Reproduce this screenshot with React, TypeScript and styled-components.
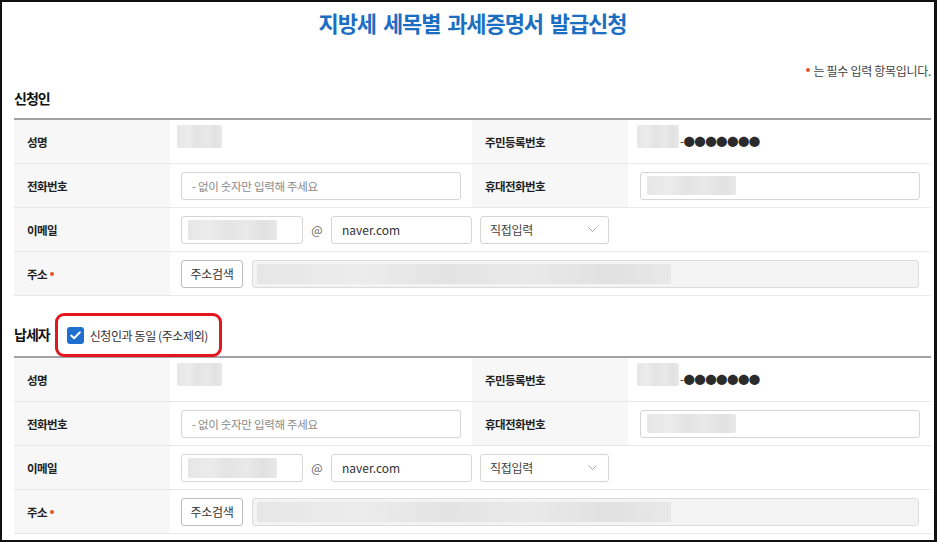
import styled, { createGlobalStyle, css } from 'styled-components';

const GlobalStyle = createGlobalStyle`
  html, body {
    margin: 0;
    padding: 0;
    background: #fff;
  }
  body {
    font-family: 'Noto Sans CJK KR', 'Noto Sans', sans-serif;
    color: #222;
  }
  * {
    box-sizing: border-box;
  }
`;

const Frame = styled.div`
  width: 937px;
  height: 542px;
  border: 2px solid #111;
  border-right-width: 3px;
  padding: 0 3px 0 12px;
  overflow: hidden;
`;

const Title = styled.h1`
  margin: 0;
  height: 40px;
  line-height: 40px;
  text-align: center;
  font-size: 22px;
  font-weight: 700;
  letter-spacing: -1.1px;
  word-spacing: 3px;
  color: #1b6ec2;
`;

const RequiredNote = styled.p`
  margin: 20px 0 0;
  height: 16px;
  display: flex;
  justify-content: flex-end;
  align-items: center;
  gap: 3px;
  font-size: 12px;
  letter-spacing: -0.3px;
  color: #444;
`;

const Dot = styled.span`
  display: inline-block;
  width: 4px;
  height: 4px;
  border-radius: 50%;
  background: #e4561f;
`;

const SectionHead = styled.div<{ $height: number; $top?: number }>`
  height: ${({ $height }) => $height}px;
  padding-top: ${({ $top }) => $top ?? 0}px;
  display: flex;
  align-items: center;
  gap: 5px;
`;

const SectionTitle = styled.h2`
  margin: 0;
  font-size: 14px;
  font-weight: 700;
  letter-spacing: -1px;
  color: #111;
`;

const HighlightBox = styled.label`
  position: relative;
  top: 1px;
  height: 44px;
  display: flex;
  align-items: center;
  gap: 6px;
  padding: 0 11px 0 9px;
  border: 3px solid #e3161d;
  border-radius: 9px;
  font-size: 12px;
  letter-spacing: -0.4px;
  color: #333;
`;

const CheckBox = styled.span`
  width: 17px;
  height: 17px;
  border-radius: 3px;
  background: #1f6fcf;
  display: flex;
  align-items: center;
  justify-content: center;
`;

const Table = styled.div`
  border-top: 2px solid #a3a3a3;
`;

const Row = styled.div`
  display: grid;
  grid-template-columns: 156px 302px 156px 1fr;
  height: 44px;
  border-bottom: 1px solid #e8e8e8;
`;

const Label = styled.div`
  background: #f7f7f7;
  display: flex;
  align-items: center;
  gap: 3px;
  padding-left: 13px;
  font-size: 11.5px;
  font-weight: 700;
  letter-spacing: -0.6px;
  color: #222;
`;

const Value = styled.div<{ $span?: number; $pad?: number; $padRight?: number; $gap?: number }>`
  grid-column: span ${({ $span }) => $span ?? 1};
  display: flex;
  align-items: center;
  gap: ${({ $gap }) => $gap ?? 8}px;
  padding-left: ${({ $pad }) => $pad ?? 11}px;
  padding-right: ${({ $padRight }) => $padRight ?? 11}px;
`;

const fieldBase = css`
  height: 28px;
  border: 1px solid #d5d5d5;
  border-radius: 3px;
  background: #fff;
  font-family: inherit;
  font-size: 12px;
  color: #333;
`;

const TextInput = styled.input<{ $w: number }>`
  ${fieldBase};
  width: ${({ $w }) => $w}px;
  padding: 0 10px;
  outline: none;
  &::placeholder {
    color: #8a8a8a;
    font-size: 11.5px;
    letter-spacing: -0.3px;
  }
`;

const Field = styled.div<{ $w?: number; $muted?: boolean; $pad?: number }>`
  ${fieldBase};
  width: ${({ $w }) => ($w ? `${$w}px` : 'auto')};
  flex: ${({ $w }) => ($w ? 'none' : 1)};
  display: flex;
  align-items: center;
  padding: 0 ${({ $pad }) => $pad ?? 6}px;
  background: ${({ $muted }) => ($muted ? '#f3f3f3' : '#fff')};
  border-color: ${({ $muted }) => ($muted ? '#dcdcdc' : '#d5d5d5')};
`;

const Select = styled.div`
  ${fieldBase};
  width: 129px;
  display: flex;
  align-items: center;
  justify-content: space-between;
  padding: 0 11px 0 9px;
  letter-spacing: -0.3px;
  color: #444;
`;

const At = styled.span`
  width: 12px;
  text-align: center;
  font-size: 12px;
  color: #666;
`;

const Button = styled.button`
  ${fieldBase};
  width: 62px;
  border-color: #bcbcbc;
  padding: 0;
  letter-spacing: -0.3px;
  cursor: pointer;
`;

const Blur = styled.span<{ $w: number; $h: number; $lift?: number }>`
  display: block;
  flex: none;
  width: ${({ $w }) => $w}px;
  height: ${({ $h }) => $h}px;
  margin-bottom: ${({ $lift }) => ($lift ?? 0) * 2}px;
  border-radius: 2px;
  background: linear-gradient(
    90deg,
    #e6e6e6 0%,
    #ececec 25%,
    #e3e3e3 45%,
    #e9e9e9 65%,
    #e1e1e1 85%,
    #e8e8e8 100%
  );
  filter: blur(0.6px);
`;

const Masked = styled.span`
  font-size: 11.5px;
  letter-spacing: -0.6px;
  color: #2b2b2b;
  margin-bottom: 2px;
`;

const Chevron = () => (
  <svg width="9" height="5" viewBox="0 0 9 5" fill="none">
    <path d="M0.5 0.5L4.5 4.5L8.5 0.5" stroke="#a0a0a0" strokeWidth="1" />
  </svg>
);

const Check = () => (
  <svg width="11" height="9" viewBox="0 0 11 9" fill="none">
    <path d="M1.2 4.6L4.1 7.3L9.8 1.4" stroke="#fff" strokeWidth="2" strokeLinecap="round" strokeLinejoin="round" />
  </svg>
);

const PersonTable = () => (
  <Table>
    <Row>
      <Label>성명</Label>
      <Value $pad={7}>
        <Blur $w={45} $h={23} $lift={5} />
      </Value>
      <Label>주민등록번호</Label>
      <Value $pad={9} $gap={1}>
        <Blur $w={42} $h={23} $lift={5} />
        <Masked>-●●●●●●●</Masked>
      </Value>
    </Row>
    <Row>
      <Label>전화번호</Label>
      <Value>
        <TextInput $w={280} placeholder="- 없이 숫자만 입력해 주세요" />
      </Value>
      <Label>휴대전화번호</Label>
      <Value $pad={12} $padRight={12}>
        <Field $w={280}>
          <Blur $w={89} $h={19} />
        </Field>
      </Value>
    </Row>
    <Row>
      <Label>이메일</Label>
      <Value $span={3}>
        <Field $w={122}>
          <Blur $w={89} $h={20} />
        </Field>
        <At>@</At>
        <TextInput $w={141} defaultValue="naver.com" readOnly />
        <Select>
          직접입력
          <Chevron />
        </Select>
      </Value>
    </Row>
    <Row>
      <Label>
        주소
        <Dot />
      </Label>
      <Value $span={3} $padRight={12} $gap={9}>
        <Button type="button">주소검색</Button>
        <Field $muted $pad={4}>
          <Blur $w={414} $h={20} />
        </Field>
      </Value>
    </Row>
  </Table>
);

const App = () => {
  return (
    <>
      <GlobalStyle />
      <Frame>
        <Title>지방세 세목별 과세증명서 발급신청</Title>
        <RequiredNote>
          <Dot />는 필수 입력 항목입니다.
        </RequiredNote>

        <SectionHead $height={40}>
          <SectionTitle>신청인</SectionTitle>
        </SectionHead>
        <PersonTable />

        <SectionHead $height={60} $top={16}>
          <SectionTitle>납세자</SectionTitle>
          <HighlightBox>
            <CheckBox>
              <Check />
            </CheckBox>
            신청인과 동일 (주소제외)
          </HighlightBox>
        </SectionHead>
        <PersonTable />
      </Frame>
    </>
  );
};

export default App;
